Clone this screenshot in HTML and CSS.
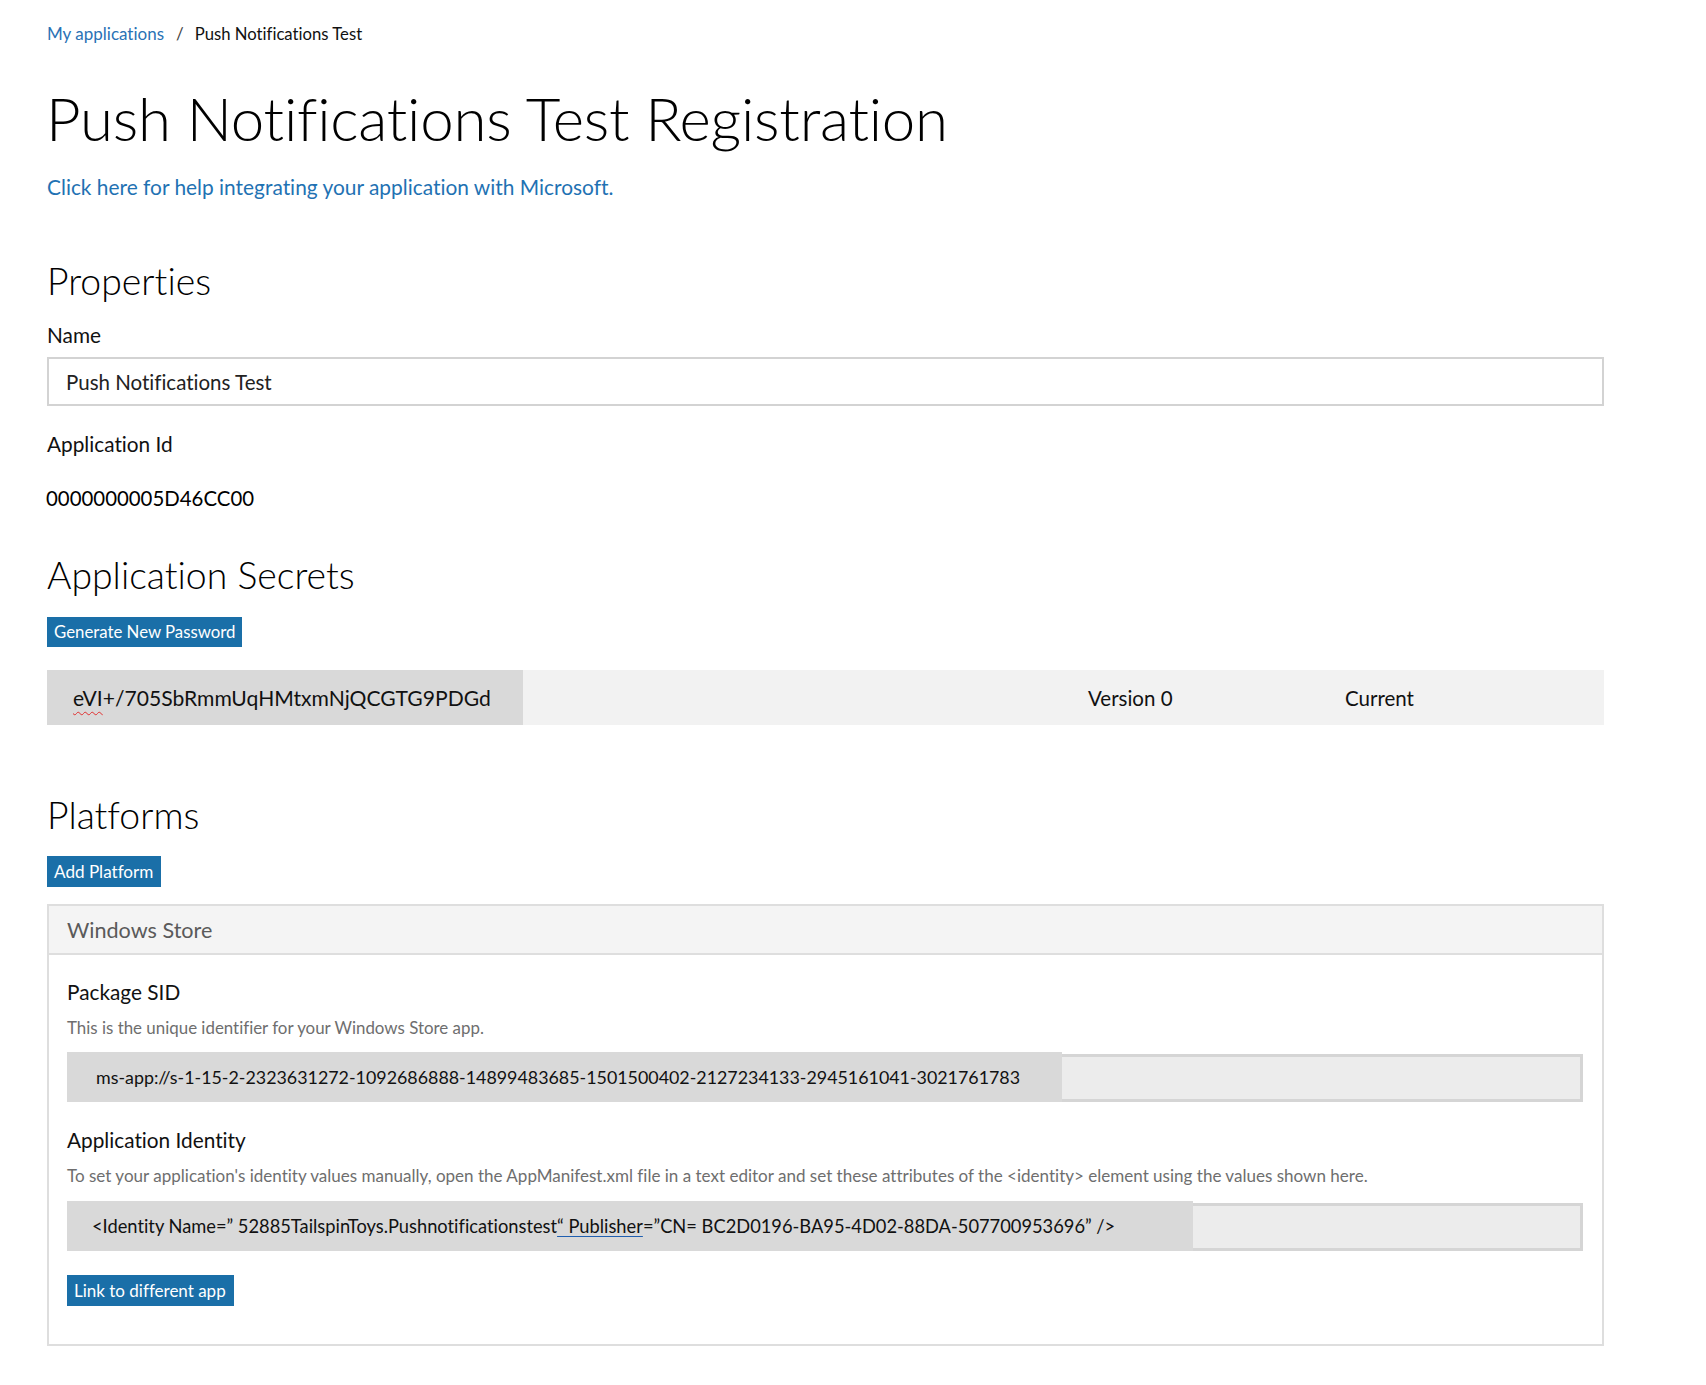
FILE: index.html
```html
<!DOCTYPE html>
<html lang="en">
<head>
<meta charset="utf-8">
<title>Push Notifications Test Registration</title>
<link rel="stylesheet" href="styles.css">
</head>
<body>
<main class="page">
  <nav class="crumbs">
    <a class="crumb-link" href="#">My applications</a>
    <span class="crumb-sep">/</span>
    <span class="crumb-current">Push Notifications Test</span>
  </nav>

  <h1 class="title">Push Notifications Test Registration</h1>
  <p class="help"><a href="#" class="help-link">Click here for help integrating your application with Microsoft.</a></p>

  <h2 class="section-title section-properties">Properties</h2>
  <div class="label label-name">Name</div>
  <div class="text-input">Push Notifications Test</div>
  <div class="label label-appid">Application Id</div>
  <div class="appid-value">0000000005D46CC00</div>

  <h2 class="section-title section-secrets">Application Secrets</h2>
  <button class="btn btn-generate" type="button">Generate New Password</button>
  <div class="secret-row">
    <div class="secret-key"><span class="spell">eVI</span>+/705SbRmmUqHMtxmNjQCGTG9PDGd</div>
    <div class="secret-gap"></div>
    <div class="secret-version">Version 0</div>
    <div class="secret-status">Current</div>
  </div>

  <h2 class="section-title section-platforms">Platforms</h2>
  <button class="btn btn-add" type="button">Add Platform</button>

  <section class="panel">
    <header class="panel-head">Windows Store</header>
    <div class="panel-body">
      <div class="label label-sid">Package SID</div>
      <div class="desc desc-sid">This is the unique identifier for your Windows Store app.</div>
      <div class="value-box value-sid">
        <div class="value-text">ms-app://s-1-15-2-2323631272-1092686888-14899483685-1501500402-2127234133-2945161041-3021761783</div>
        <div class="value-rest"></div>
      </div>

      <div class="label label-identity">Application Identity</div>
      <div class="desc desc-identity">To set your application's identity values manually, open the AppManifest.xml file in a text editor and set these attributes of the &lt;identity&gt; element using the values shown here.</div>
      <div class="value-box value-identity">
        <div class="value-text value-text-identity">&lt;Identity Name=&#8221; 52885TailspinToys.Pushnotificationstest<span class="underline">&#8220; Publisher</span>=&#8221;CN= BC2D0196-BA95-4D02-88DA-507700953696&#8221; /&gt;</div>
        <div class="value-rest"></div>
      </div>

      <button class="btn btn-link" type="button">Link to different app</button>
    </div>
  </section>
</main>
</body>
</html>
```
FILE: styles.css
```css
html, body {
  margin: 0;
  padding: 0;
  background: #ffffff;
}

body {
  font-family: Lato, "Open Sans", "Liberation Sans", sans-serif;
  font-variant-ligatures: none;
  color: #111111;
}

.page {
  width: 1557px;
  padding: 0 0 40px 47px;
  display: flex;
  flex-direction: column;
  align-items: flex-start;
}

/* breadcrumb */
.crumbs {
  margin-top: 22px;
  height: 24px;
  line-height: 24px;
  font-size: 17px;
  display: flex;
}
.crumb-link {
  color: #2a72b5;
  text-decoration: none;
}
.crumb-sep {
  color: #444;
  margin: 0 11px 0 12px;
}
.crumb-current {
  color: #111;
  font-size: 16.7px;
}

/* title */
.title {
  margin: 32px 0 0 -1px;
  font-size: 60px;
  line-height: 80px;
  font-weight: 300;
  letter-spacing: -0.25px;
  color: #000;
}

.help {
  margin: 15px 0 0;
  line-height: 28px;
  font-size: 20.9px;
}
.help-link {
  color: #1f72b3;
  text-decoration: none;
}

.section-title {
  margin: 0;
  font-size: 37.4px;
  line-height: 50px;
  font-weight: 300;
  color: #000;
}
.section-properties { margin-top: 55px; }
.section-secrets { margin-top: 38px; }
.section-platforms { margin-top: 65px; }

.label {
  font-size: 20.8px;
  line-height: 28px;
  color: #111;
}
.label-name { margin-top: 15px; }
.label-appid { margin-top: 24px; }

.text-input {
  box-sizing: border-box;
  margin-top: 8px;
  width: 1557px;
  height: 49px;
  border: 2px solid #d3d3d3;
  padding: 0 0 0 17px;
  display: flex;
  align-items: center;
  font-size: 20.5px;
  color: #222;
}

.appid-value {
  margin-top: 26px;
  margin-left: -1px;
  font-size: 20.4px;
  line-height: 28px;
  color: #000;
}

/* buttons */
.btn {
  box-sizing: border-box;
  border: none;
  border-radius: 0;
  background: #1a6fa8;
  color: #ffffff;
  font-family: inherit;
  font-variant-ligatures: none;
  font-size: 16.8px;
  height: 30px;
  padding: 0 7px 1px 7px;
  line-height: 29px;
  cursor: pointer;
}
.btn-generate { margin-top: 17px; }
.btn-add { margin-top: 16px; height: 31px; padding: 0 8px 1px 7px; font-size: 17.1px; }
.btn-link { margin-top: 24px; height: 31px; padding: 0 8px 1px 7px; font-size: 17px; }

/* secret row */
.secret-row {
  margin-top: 23px;
  width: 1557px;
  height: 55px;
  display: grid;
  grid-template-columns: 476px 565px 257px 1fr;
  align-items: center;
  background: #f2f2f2;
  font-size: 20.5px;
  color: #111;
}
.secret-key {
  height: 100%;
  background: #d9d9d9;
  display: flex;
  align-items: center;
  padding-left: 26px;
  font-size: 21.1px;
}
.spell {
  text-decoration: underline wavy #e03030;
  text-decoration-thickness: 1px;
  text-underline-offset: 5px;
}

/* panel */
.panel {
  box-sizing: border-box;
  margin-top: 17px;
  width: 1557px;
  border: 2px solid #dedede;
}
.panel-head {
  box-sizing: border-box;
  height: 49px;
  background: #f4f4f4;
  border-bottom: 2px solid #dedede;
  padding-left: 18px;
  display: flex;
  align-items: center;
  font-size: 21.6px;
  color: #5a5a5a;
}
.panel-body {
  padding: 0 19px 38px 18px;
  display: flex;
  flex-direction: column;
  align-items: flex-start;
}
.label-sid { margin-top: 23px; }
.label-identity { margin-top: 24px; }

.desc {
  font-size: 16.9px;
  line-height: 22px;
  color: #6e6e6e;
  margin-top: 11px;
  white-space: nowrap;
}
.desc-identity { font-size: 17.05px; }

.value-box {
  margin-top: 13px;
  width: 100%;
  height: 50px;
  display: flex;
  align-items: stretch;
}
.value-identity { margin-top: 14px; }
.value-text {
  background: #d9d9d9;
  display: flex;
  align-items: center;
  font-size: 17.85px;
  color: #111;
  white-space: nowrap;
}
.value-sid .value-text {
  width: 995px;
  padding-left: 29px;
  box-sizing: border-box;
}
.value-text-identity {
  width: 1126px;
  padding-left: 25px;
  box-sizing: border-box;
  font-size: 18.3px;
}
.value-rest {
  flex: 1;
  box-sizing: border-box;
  margin-top: 2px;
  background: #ececec;
  border: 3px solid #d5d5d5;
  border-left: none;
}
.underline {
  text-decoration: underline;
  text-decoration-color: #1f5fb0;
  text-underline-offset: 3px;
}
```
